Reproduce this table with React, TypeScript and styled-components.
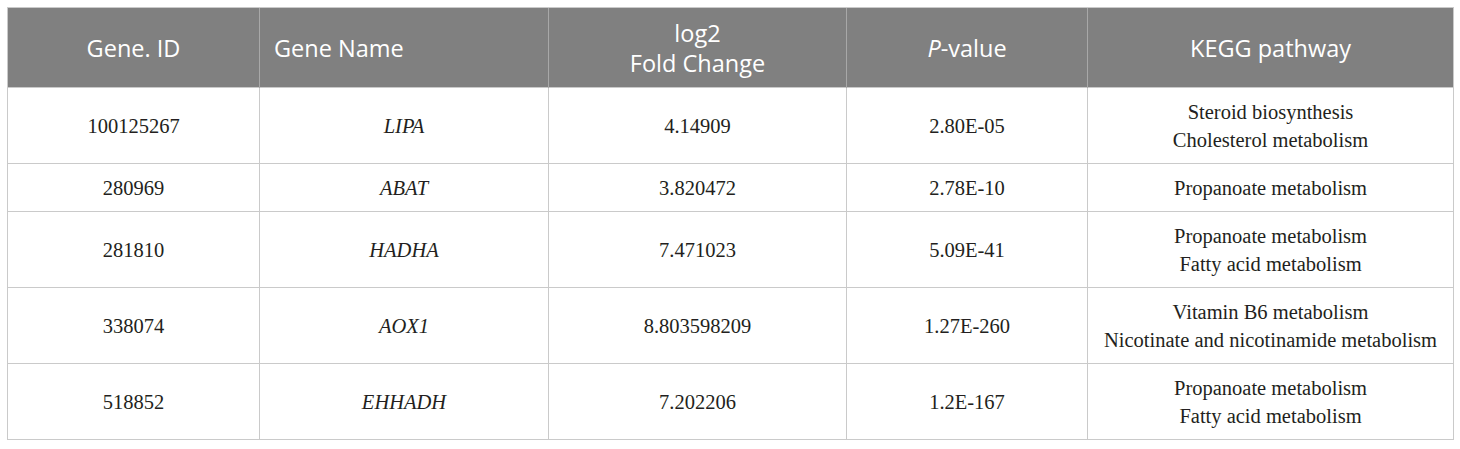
import React from "react";
import styled, { createGlobalStyle } from "styled-components";

const Global = createGlobalStyle`
  html, body { margin: 0; padding: 0; background: #ffffff; }
  body { width: 1460px; height: 449px; overflow: hidden; }
`;

const Page = styled.div`
  padding: 7px 7px 0 7px;
`;

const Table = styled.table`
  width: 1446px;
  border-collapse: collapse;
  table-layout: fixed;
  border: 1px solid #cacaca;
`;

const HeadCell = styled.th<{ $left?: boolean }>`
  background: #808080;
  color: #ffffff;
  font-family: "Open Sans", "Noto Sans", sans-serif;
  font-weight: 400;
  font-size: 23.5px;
  line-height: 30px;
  height: 80px;
  box-sizing: border-box;
  padding: 0 14px;
  text-align: ${(p) => (p.$left ? "left" : "center")};
  vertical-align: middle;
  border-left: 1px solid #a8a8a8;
  border-top: 1px solid #cacaca;
  &:first-child { border-left: 1px solid #cacaca; }
`;

const Cell = styled.td<{ $italic?: boolean }>`
  font-family: "Liberation Serif", "Times New Roman", serif;
  font-style: ${(p) => (p.$italic ? "italic" : "normal")};
  font-size: 20.5px;
  line-height: 28px;
  color: #231f20;
  text-align: center;
  vertical-align: middle;
  padding: 0 6px;
  border: 1px solid #cacaca;
`;

const Row = styled.tr<{ $h: number }>`
  height: ${(p) => p.$h}px;
`;

const Line = styled.div``;

type Entry = {
  id: string;
  name: string;
  fc: string;
  p: string;
  kegg: string[];
};

const rows: Entry[] = [
  { id: "100125267", name: "LIPA", fc: "4.14909", p: "2.80E-05", kegg: ["Steroid biosynthesis", "Cholesterol metabolism"] },
  { id: "280969", name: "ABAT", fc: "3.820472", p: "2.78E-10", kegg: ["Propanoate metabolism"] },
  { id: "281810", name: "HADHA", fc: "7.471023", p: "5.09E-41", kegg: ["Propanoate metabolism", "Fatty acid metabolism"] },
  { id: "338074", name: "AOX1", fc: "8.803598209", p: "1.27E-260", kegg: ["Vitamin B6 metabolism", "Nicotinate and nicotinamide metabolism"] },
  { id: "518852", name: "EHHADH", fc: "7.202206", p: "1.2E-167", kegg: ["Propanoate metabolism", "Fatty acid metabolism"] },
];

export default function App() {
  return (
    <Page>
      <Global />
      <Table>
        <colgroup>
          <col style={{ width: 252 }} />
          <col style={{ width: 289 }} />
          <col style={{ width: 298 }} />
          <col style={{ width: 241 }} />
          <col style={{ width: 366 }} />
        </colgroup>
        <thead>
          <tr>
            <HeadCell>Gene. ID</HeadCell>
            <HeadCell $left>Gene Name</HeadCell>
            <HeadCell>
              log2
              <br />
              Fold Change
            </HeadCell>
            <HeadCell>
              <i>P</i>-value
            </HeadCell>
            <HeadCell>KEGG pathway</HeadCell>
          </tr>
        </thead>
        <tbody>
          {rows.map((r) => (
            <Row key={r.id} $h={r.kegg.length > 1 ? 76 : 48}>
              <Cell>{r.id}</Cell>
              <Cell $italic>{r.name}</Cell>
              <Cell>{r.fc}</Cell>
              <Cell>{r.p}</Cell>
              <Cell>
                {r.kegg.map((k) => (
                  <Line key={k}>{k}</Line>
                ))}
              </Cell>
            </Row>
          ))}
        </tbody>
      </Table>
    </Page>
  );
}
